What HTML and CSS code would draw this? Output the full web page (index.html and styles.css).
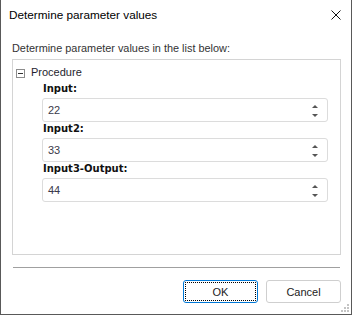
FILE: index.html
```html
<!DOCTYPE html>
<html>
<head>
<meta charset="utf-8">
<link rel="stylesheet" href="styles.css">
</head>
<body>
<div class="window">
  <div class="titlebar">
    <span class="title">Determine parameter values</span>
    <svg class="close" width="10" height="10" viewBox="0 0 10 10"><path d="M0.5 0.5 L9.5 9.5 M9.5 0.5 L0.5 9.5" stroke="#111" stroke-width="1" fill="none"/></svg>
  </div>
  <div class="content">
    <div class="prompt">Determine parameter values in the list below:</div>
    <div class="group">
      <div class="tree-row">
        <svg class="toggle" width="9" height="9" viewBox="0 0 9 9"><rect x="0.5" y="0.5" width="8" height="8" fill="#fff" stroke="#8c8c8c"/><path d="M2 4.5 H7" stroke="#333"/></svg>
        <span class="node">Procedure</span>
      </div>
      <div class="field">
        <div class="label">Input:</div>
        <div class="spin"><span class="value">22</span><span class="arrows"><i class="up"></i><i class="down"></i></span></div>
      </div>
      <div class="field">
        <div class="label">Input2:</div>
        <div class="spin"><span class="value">33</span><span class="arrows"><i class="up"></i><i class="down"></i></span></div>
      </div>
      <div class="field">
        <div class="label">Input3-Output:</div>
        <div class="spin"><span class="value">44</span><span class="arrows"><i class="up"></i><i class="down"></i></span></div>
      </div>
    </div>
    <div class="separator"></div>
    <div class="buttons">
      <button class="btn btn-default">OK</button>
      <button class="btn">Cancel</button>
    </div>
  </div>
  <svg class="grip" width="9" height="9" viewBox="0 0 9 9">
    <rect x="6" y="0" width="2" height="2" fill="#c4c4c4"/>
    <rect x="3" y="3" width="2" height="2" fill="#c4c4c4"/>
    <rect x="6" y="3" width="2" height="2" fill="#c4c4c4"/>
    <rect x="0" y="6" width="2" height="2" fill="#c4c4c4"/>
    <rect x="3" y="6" width="2" height="2" fill="#c4c4c4"/>
    <rect x="6" y="6" width="2" height="2" fill="#c4c4c4"/>
  </svg>
</div>
</body>
</html>
```
FILE: styles.css
```css
* { box-sizing: border-box; }
html, body { margin: 0; padding: 0; background: #fff; }
body { font-family: "Liberation Sans", Arial, sans-serif; }

.window {
  position: relative;
  width: 352px;
  height: 315px;
  border-left: 1px solid #595959;
  border-right: 1px solid #595959;
  border-bottom: 1px solid #595959;
  background: #fff;
  display: flex;
  flex-direction: column;
}

.titlebar {
  height: 30px;
  display: flex;
  align-items: center;
  justify-content: space-between;
  padding: 0 10px 0 8px;
}
.title {
  font-size: 11.75px;
  line-height: 30px;
  color: #000;
}
.close { margin-bottom: 1px; }

.content {
  padding: 0 10px 0 11px;
  display: flex;
  flex-direction: column;
}

.prompt {
  margin-top: 11px;
  font-size: 10.9px;
  line-height: 14px;
  color: #333;
}

.group {
  margin-top: 4px;
  height: 196px;
  border: 1px solid #d4d4d4;
  padding: 5px 0 0 0;
}

.tree-row {
  display: flex;
  align-items: flex-start;
  height: 14px;
  margin-bottom: 3px;
  padding-left: 3px;
}
.toggle { margin-top: 4px; flex: none; }
.node {
  margin-left: 6px;
  font-size: 11px;
  line-height: 14px;
  color: #1e1e2e;
}

.field {
  margin-left: 29px;
  margin-right: 12px;
}
.label {
  font-family: "DejaVu Sans", Verdana, sans-serif;
  font-weight: bold;
  font-size: 10px;
  line-height: 14px;
  padding-bottom: 2px;
  padding-left: 1px;
  color: #111;
}
.spin {
  height: 24px;
  border: 1px solid #dcdcdc;
  border-radius: 3px;
  display: flex;
  align-items: center;
  justify-content: space-between;
  padding: 0 9px 0 5px;
}
.value {
  font-size: 11px;
  line-height: 22px;
  color: #3a3a4a;
}
.arrows {
  display: flex;
  flex-direction: column;
  gap: 6px;
  align-items: center;
  margin-top: 1px;
}
.arrows i {
  display: block;
  width: 0;
  height: 0;
  border-left: 3px solid transparent;
  border-right: 3px solid transparent;
}
.arrows .up { border-bottom: 3px solid #555; }
.arrows .down { border-top: 3px solid #555; }

.separator {
  margin-top: 12px;
  margin-left: 1px;
  margin-right: 1px;
  height: 1px;
  background: #a0a0a0;
}

.buttons {
  margin-top: 12px;
  display: flex;
  justify-content: flex-end;
  gap: 8px;
}
.btn {
  font-family: "Liberation Sans", Arial, sans-serif;
  font-size: 11px;
  color: #222;
  width: 75px;
  height: 23px;
  background: #fff;
  border: 1px solid #cfcfcf;
  border-radius: 3px;
  padding: 0;
}
.btn-default {
  border-color: #0078d7;
  outline: 1px dotted #000;
  outline-offset: -3px;
}

.grip {
  position: absolute;
  right: 1px;
  bottom: 1px;
}
```
